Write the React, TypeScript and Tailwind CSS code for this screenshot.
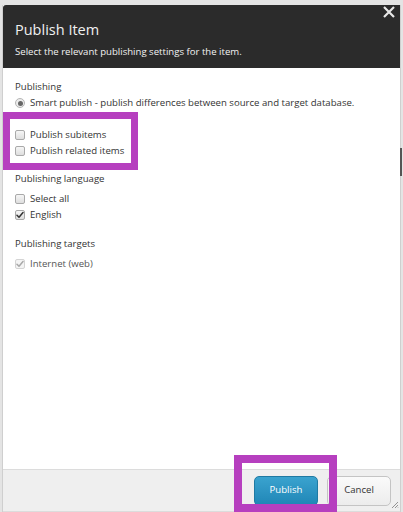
import React from "react";

function Checkbox({ checked = false, disabled = false }: { checked?: boolean; disabled?: boolean }) {
  return (
    <span
      className={`relative inline-flex h-[10px] w-[10px] shrink-0 items-center justify-center rounded-[2px] border ${
        disabled ? "border-[#d4d4d4] bg-[#f4f4f4]" : "border-[#a9a9a9] bg-gradient-to-b from-[#f6f6f6] to-[#dedede]"
      }`}
    >
      {checked && (
        <svg width="8" height="8" viewBox="0 0 8 8" className="absolute">
          <path
            d="M1 4.2 L3 6.2 L7 1.5"
            fill="none"
            stroke={disabled ? "#a8a8a8" : "#333"}
            strokeWidth="1.5"
            strokeLinecap="round"
            strokeLinejoin="round"
          />
        </svg>
      )}
    </span>
  );
}

function Row({ children, box }: { children: React.ReactNode; box: React.ReactNode }) {
  return (
    <div className="flex h-[16px] items-center gap-[5px]">
      {box}
      <span>{children}</span>
    </div>
  );
}

export default function App() {
  return (
    <div
      className="relative h-[512px] w-[403px] overflow-hidden bg-[#e4e4e4] pt-[5px] pl-[2px]"
      style={{ fontFamily: '"Open Sans", "Liberation Sans", sans-serif' }}
    >
      <div className="flex h-[507px] w-[399px] flex-col border-l border-r border-[#cfcfcf] bg-white">
        {/* Header */}
        <div className="relative h-[63px] shrink-0 rounded-tl-[3px] bg-[#2b2b2b] pl-[12px] pt-[15px]">
          <div className="text-[14.5px] leading-[20px] text-[#f0f0f0]">Publish Item</div>
          <div className="mt-[5px] text-[9.6px] leading-[14px] text-[#f2f2f2]">
            Select the relevant publishing settings for the item.
          </div>
          <svg width="12" height="12" viewBox="0 0 12 12" className="absolute right-[5px] top-[1px]">
            <path d="M1 1 L11 11 M11 1 L1 11" stroke="#e8e8e8" strokeWidth="2.2" />
          </svg>
        </div>

        {/* Body */}
        <div className="flex-1 pl-[12px] pt-[11px] text-[9.6px] leading-[16px] text-[#333]">
          <div className="h-[16px]">Publishing</div>
          <Row
            box={
              <span className="inline-flex h-[10px] w-[10px] items-center justify-center rounded-full border border-[#b5b5b5] bg-[#ececec]">
                <span className="h-[5px] w-[5px] rounded-full bg-[#666]" />
              </span>
            }
          >
            Smart publish - publish differences between source and target database.
          </Row>
          <div className="mt-[16px]">
            <Row box={<Checkbox />}>Publish subitems</Row>
            <Row box={<Checkbox />}>Publish related items</Row>
          </div>
          <div className="mt-[12px] h-[16px]">Publishing language</div>
          <div className="mt-[4px]">
            <Row box={<Checkbox />}>Select all</Row>
            <Row box={<Checkbox checked />}>English</Row>
          </div>
          <div className="mt-[13px] h-[16px]">Publishing targets</div>
          <div className="mt-[4px] text-[#555]">
            <Row box={<Checkbox checked disabled />}>Internet (web)</Row>
          </div>
        </div>

        {/* Footer */}
        <div className="relative flex h-[43px] shrink-0 items-center justify-end gap-[9px] border-t border-b border-[#dcdcdc] bg-[#efefef] pr-[9px]">
          <button className="h-[30px] w-[64px] rounded-[5px] border border-[#1f7aa3] bg-gradient-to-b from-[#3aa3cf] to-[#1f86b6] text-[9.6px] text-white">
            Publish
          </button>
          <button className="h-[30px] w-[64px] rounded-[5px] border border-[#c4c4c4] bg-gradient-to-b from-[#fafafa] to-[#ececec] text-[9.6px] text-[#333]">
            Cancel
          </button>
          <svg width="8" height="8" viewBox="0 0 8 8" className="absolute bottom-[2px] right-[1px]">
            <path d="M7 1 L1 7 M7 4 L4 7 M7 6.5 L6.5 7" stroke="#888" strokeWidth="0.9" />
          </svg>
        </div>
      </div>

      {/* Annotation highlights */}
      <div className="absolute left-[3px] top-[112px] h-[58px] w-[135px] border-[7px] border-[#b63fbf]" />
      <div className="absolute left-[234px] top-[455px] h-[57px] w-[103px] border-[8px] border-[#b63fbf]" />
      <div className="absolute left-[400px] top-[148px] h-[28px] w-[2px] bg-[#555]" />
    </div>
  );
}
